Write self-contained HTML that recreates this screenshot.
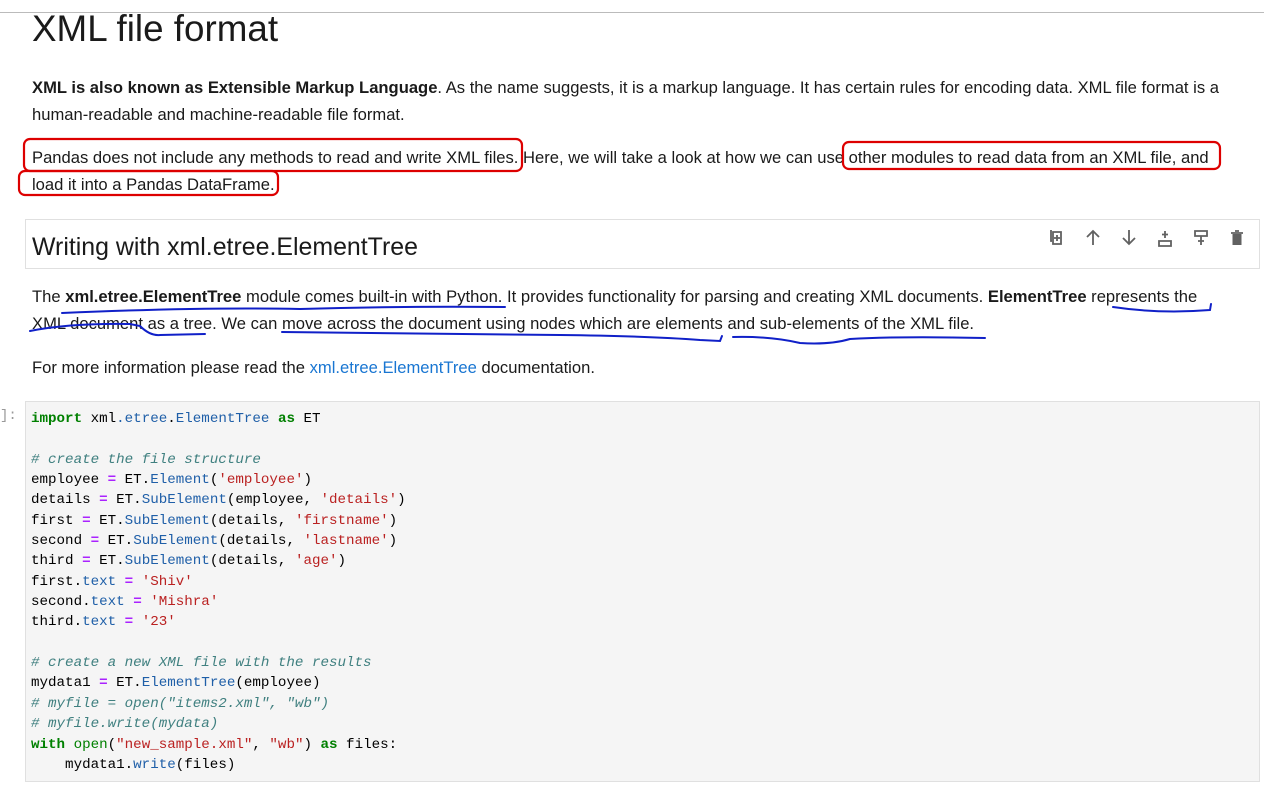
<!DOCTYPE html>
<html><head><meta charset="utf-8"><style>
body{margin:0;width:1264px;height:795px;overflow:hidden;background:#fff;font-family:"Liberation Sans",sans-serif;color:#1a1a1a;position:relative}
.t{position:absolute;left:32px;white-space:nowrap;font-size:16.6px;line-height:20px}
.b{font-weight:bold}
.code{position:absolute;left:25px;top:401px;width:1233px;height:379px;background:#f5f5f5;border:1px solid #e0e0e0}
.code pre{margin:0;position:absolute;left:5px;top:7px;font-family:"Liberation Mono",monospace;font-size:14.2px;line-height:20.35px;color:#000}
.k{color:#008000;font-weight:bold}.o{color:#aa22ff;font-weight:bold}.s{color:#ba2121}.c{color:#408080;font-style:italic}.a{color:#1f5fa8}.f{color:#1f5fa8}
</style></head><body>
<div style="position:absolute;left:0;top:12px;width:1264px;height:1px;background:#bbb"></div>
<div style="position:absolute;left:32px;top:9px;font-size:36.8px;line-height:40px">XML file format</div>
<div class="t" style="top:78px"><span class="b">XML is also known as Extensible Markup Language</span>. As the name suggests, it is a markup language. It has certain rules for encoding data. XML file format is a</div>
<div class="t" style="top:105px">human-readable and machine-readable file format.</div>
<div class="t" style="top:148px">Pandas does not include any methods to read and write XML files. Here, we will take a look at how we can use other modules to read data from an XML file, and</div>
<div class="t" style="top:175px">load it into a Pandas DataFrame.</div>
<div style="position:absolute;left:25px;top:219px;width:1233px;height:48px;border:1px solid #e0e0e0"></div>
<div style="position:absolute;left:32px;top:233px;font-size:24.9px;line-height:28px">Writing with xml.etree.ElementTree</div>
<svg style="position:absolute;left:1045px;top:226px" width="210" height="22" viewBox="0 0 210 22" fill="none" stroke="#616161" stroke-width="1.8">
<path d="M6 4v11h1M8 6h8v12H8z"/><path d="M12 9v6M9 12h6"/>
<path d="M48 19V5M42 11l6-6 6 6"/>
<path d="M84 4v14M78 12l6 6 6-6"/>
<path d="M114 15h12v5h-12z M120 5v7M117 8.5h6"/>
<path d="M150 5h12v5h-12z M156 10v9M153 15h6"/>
<path d="M186 7h12M190 5h4" /><rect x="187.5" y="8" width="9" height="11" fill="#616161" stroke="none"/>
</svg>
<div class="t" style="top:287px">The <span class="b">xml.etree.ElementTree</span> module comes built-in with Python. It provides functionality for parsing and creating XML documents. <span class="b">ElementTree</span> represents the</div>
<div class="t" style="top:314px">XML document as a tree. We can move across the document using nodes which are elements and sub-elements of the XML file.</div>
<div class="t" style="top:358px">For more information please read the <span style="color:#1976d2">xml.etree.ElementTree</span> documentation.</div>
<div style="position:absolute;left:0;top:408px;font-family:'Liberation Mono',monospace;font-size:14px;color:#999">]:</div>
<div class="code"><pre><span class="k">import</span> xml<span class="a">.</span><span class="a">etree</span>.<span class="a">ElementTree</span> <span class="k">as</span> ET

<span class="c"># create the file structure</span>
employee <span class="o">=</span> ET.<span class="f">Element</span>(<span class="s">'employee'</span>)
details <span class="o">=</span> ET.<span class="f">SubElement</span>(employee, <span class="s">'details'</span>)
first <span class="o">=</span> ET.<span class="f">SubElement</span>(details, <span class="s">'firstname'</span>)
second <span class="o">=</span> ET.<span class="f">SubElement</span>(details, <span class="s">'lastname'</span>)
third <span class="o">=</span> ET.<span class="f">SubElement</span>(details, <span class="s">'age'</span>)
first.<span class="f">text</span> <span class="o">=</span> <span class="s">'Shiv'</span>
second.<span class="f">text</span> <span class="o">=</span> <span class="s">'Mishra'</span>
third.<span class="f">text</span> <span class="o">=</span> <span class="s">'23'</span>

<span class="c"># create a new XML file with the results</span>
mydata1 <span class="o">=</span> ET.<span class="f">ElementTree</span>(employee)
<span class="c"># myfile = open("items2.xml", "wb")</span>
<span class="c"># myfile.write(mydata)</span>
<span class="k">with</span> <span class="k" style="font-weight:normal">open</span>(<span class="s">"new_sample.xml"</span>, <span class="s">"wb"</span>) <span class="k">as</span> files:
    mydata1.<span class="f">write</span>(files)</pre></div>
<svg style="position:absolute;left:0;top:0" width="1264" height="795" fill="none">
<g stroke="#d00" stroke-width="2.2">
<rect x="24" y="139" width="498" height="32" rx="6"/>
<rect x="19" y="171" width="259" height="24" rx="6"/>
<rect x="843" y="142" width="377" height="27" rx="6"/>
</g>
<g stroke="#1020c8" stroke-width="2" stroke-linecap="round">
<path d="M62 313 Q200 307 300 309 Q400 306 505 307"/>
<path d="M1113 307 Q1160 314 1210 310 L1211 304"/>
<path d="M30 331 Q70 323 130 324 L140 326 Q150 336 160 335 L205 334"/>
<path d="M282 332 Q450 334 560 335 Q650 336 700 340 L720 341 L722 336"/>
<path d="M733 337 Q770 336 800 343 Q830 345 850 339 Q900 336 985 338"/>
</g>
</svg>
</body></html>
